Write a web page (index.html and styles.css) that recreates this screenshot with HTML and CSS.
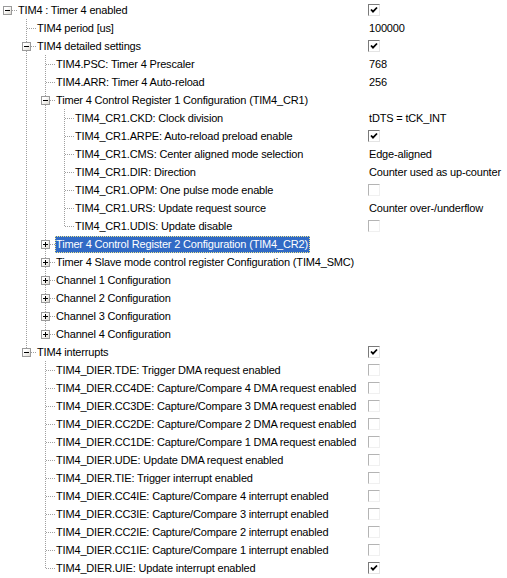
FILE: index.html
```html
<!DOCTYPE html>
<html>
<head>
<meta charset="utf-8">
<link rel="stylesheet" href="styles.css">
</head>
<body>
<div class="tree">
  <div class="row"><div class="tc"><span class="c"><i class="x minus"></i></span><span class="lbl">TIM4 : Timer 4 enabled</span></div><div class="val"><span class="cb on"><svg viewBox="0 0 10 10"><path d="M2 4.5 L4 6.7 L8 2.5"/></svg></span></div></div>
  <div class="row"><div class="tc"><span class="g"></span><span class="c t b"></span><span class="lbl">TIM4 period [us]</span></div><div class="val">100000</div></div>
  <div class="row"><div class="tc"><span class="g"></span><span class="c t b"><i class="x minus"></i></span><span class="lbl">TIM4 detailed settings</span></div><div class="val"><span class="cb on"><svg viewBox="0 0 10 10"><path d="M2 4.5 L4 6.7 L8 2.5"/></svg></span></div></div>
  <div class="row"><div class="tc"><span class="g"></span><span class="g v"></span><span class="c t b"></span><span class="lbl">TIM4.PSC: Timer 4 Prescaler</span></div><div class="val">768</div></div>
  <div class="row"><div class="tc"><span class="g"></span><span class="g v"></span><span class="c t b"></span><span class="lbl">TIM4.ARR: Timer 4 Auto-reload</span></div><div class="val">256</div></div>
  <div class="row"><div class="tc"><span class="g"></span><span class="g v"></span><span class="c t b"><i class="x minus"></i></span><span class="lbl">Timer 4 Control Register 1 Configuration (TIM4_CR1)</span></div><div class="val"></div></div>
  <div class="row"><div class="tc"><span class="g"></span><span class="g v"></span><span class="g v"></span><span class="c t b"></span><span class="lbl">TIM4_CR1.CKD: Clock division</span></div><div class="val">tDTS = tCK_INT</div></div>
  <div class="row"><div class="tc"><span class="g"></span><span class="g v"></span><span class="g v"></span><span class="c t b"></span><span class="lbl">TIM4_CR1.ARPE: Auto-reload preload enable</span></div><div class="val"><span class="cb on"><svg viewBox="0 0 10 10"><path d="M2 4.5 L4 6.7 L8 2.5"/></svg></span></div></div>
  <div class="row"><div class="tc"><span class="g"></span><span class="g v"></span><span class="g v"></span><span class="c t b"></span><span class="lbl">TIM4_CR1.CMS: Center aligned mode selection</span></div><div class="val">Edge-aligned</div></div>
  <div class="row"><div class="tc"><span class="g"></span><span class="g v"></span><span class="g v"></span><span class="c t b"></span><span class="lbl">TIM4_CR1.DIR: Direction</span></div><div class="val">Counter used as up-counter</div></div>
  <div class="row"><div class="tc"><span class="g"></span><span class="g v"></span><span class="g v"></span><span class="c t b"></span><span class="lbl">TIM4_CR1.OPM: One pulse mode enable</span></div><div class="val"><span class="cb"></span></div></div>
  <div class="row"><div class="tc"><span class="g"></span><span class="g v"></span><span class="g v"></span><span class="c t b"></span><span class="lbl">TIM4_CR1.URS: Update request source</span></div><div class="val">Counter over-/underflow</div></div>
  <div class="row"><div class="tc"><span class="g"></span><span class="g v"></span><span class="g v"></span><span class="c t"></span><span class="lbl">TIM4_CR1.UDIS: Update disable</span></div><div class="val"><span class="cb"></span></div></div>
  <div class="row"><div class="tc"><span class="g"></span><span class="g v"></span><span class="c t b"><i class="x plus"></i></span><span class="lbl sel">Timer 4 Control Register 2 Configuration (TIM4_CR2)</span></div><div class="val"></div></div>
  <div class="row"><div class="tc"><span class="g"></span><span class="g v"></span><span class="c t b"><i class="x plus"></i></span><span class="lbl">Timer 4 Slave mode control register Configuration (TIM4_SMC)</span></div><div class="val"></div></div>
  <div class="row"><div class="tc"><span class="g"></span><span class="g v"></span><span class="c t b"><i class="x plus"></i></span><span class="lbl">Channel 1 Configuration</span></div><div class="val"></div></div>
  <div class="row"><div class="tc"><span class="g"></span><span class="g v"></span><span class="c t b"><i class="x plus"></i></span><span class="lbl">Channel 2 Configuration</span></div><div class="val"></div></div>
  <div class="row"><div class="tc"><span class="g"></span><span class="g v"></span><span class="c t b"><i class="x plus"></i></span><span class="lbl">Channel 3 Configuration</span></div><div class="val"></div></div>
  <div class="row"><div class="tc"><span class="g"></span><span class="g v"></span><span class="c t"><i class="x plus"></i></span><span class="lbl">Channel 4 Configuration</span></div><div class="val"></div></div>
  <div class="row"><div class="tc"><span class="g"></span><span class="c t"><i class="x minus"></i></span><span class="lbl">TIM4 interrupts</span></div><div class="val"><span class="cb on"><svg viewBox="0 0 10 10"><path d="M2 4.5 L4 6.7 L8 2.5"/></svg></span></div></div>
  <div class="row"><div class="tc"><span class="g"></span><span class="g"></span><span class="c t b"></span><span class="lbl">TIM4_DIER.TDE: Trigger DMA request enabled</span></div><div class="val"><span class="cb"></span></div></div>
  <div class="row"><div class="tc"><span class="g"></span><span class="g"></span><span class="c t b"></span><span class="lbl">TIM4_DIER.CC4DE: Capture/Compare 4 DMA request enabled</span></div><div class="val"><span class="cb"></span></div></div>
  <div class="row"><div class="tc"><span class="g"></span><span class="g"></span><span class="c t b"></span><span class="lbl">TIM4_DIER.CC3DE: Capture/Compare 3 DMA request enabled</span></div><div class="val"><span class="cb"></span></div></div>
  <div class="row"><div class="tc"><span class="g"></span><span class="g"></span><span class="c t b"></span><span class="lbl">TIM4_DIER.CC2DE: Capture/Compare 2 DMA request enabled</span></div><div class="val"><span class="cb"></span></div></div>
  <div class="row"><div class="tc"><span class="g"></span><span class="g"></span><span class="c t b"></span><span class="lbl">TIM4_DIER.CC1DE: Capture/Compare 1 DMA request enabled</span></div><div class="val"><span class="cb"></span></div></div>
  <div class="row"><div class="tc"><span class="g"></span><span class="g"></span><span class="c t b"></span><span class="lbl">TIM4_DIER.UDE: Update DMA request enabled</span></div><div class="val"><span class="cb"></span></div></div>
  <div class="row"><div class="tc"><span class="g"></span><span class="g"></span><span class="c t b"></span><span class="lbl">TIM4_DIER.TIE: Trigger interrupt enabled</span></div><div class="val"><span class="cb"></span></div></div>
  <div class="row"><div class="tc"><span class="g"></span><span class="g"></span><span class="c t b"></span><span class="lbl">TIM4_DIER.CC4IE: Capture/Compare 4 interrupt enabled</span></div><div class="val"><span class="cb"></span></div></div>
  <div class="row"><div class="tc"><span class="g"></span><span class="g"></span><span class="c t b"></span><span class="lbl">TIM4_DIER.CC3IE: Capture/Compare 3 interrupt enabled</span></div><div class="val"><span class="cb"></span></div></div>
  <div class="row"><div class="tc"><span class="g"></span><span class="g"></span><span class="c t b"></span><span class="lbl">TIM4_DIER.CC2IE: Capture/Compare 2 interrupt enabled</span></div><div class="val"><span class="cb"></span></div></div>
  <div class="row"><div class="tc"><span class="g"></span><span class="g"></span><span class="c t b"></span><span class="lbl">TIM4_DIER.CC1IE: Capture/Compare 1 interrupt enabled</span></div><div class="val"><span class="cb"></span></div></div>
  <div class="row"><div class="tc"><span class="g"></span><span class="g"></span><span class="c t"></span><span class="lbl">TIM4_DIER.UIE: Update interrupt enabled</span></div><div class="val"><span class="cb on"><svg viewBox="0 0 10 10"><path d="M2 4.5 L4 6.7 L8 2.5"/></svg></span></div></div>
</div>
</body>
</html>
```

FILE: styles.css
```css
html, body {
  margin: 0;
  padding: 0;
  background: #fff;
}
body {
  font-family: "Liberation Sans", Arial, sans-serif;
  font-size: 11px;
  letter-spacing: -0.17px;
  color: #000;
  overflow: hidden;
}
.tree {
  padding-top: 1px;
  margin-left: -2px;
}
.row {
  display: grid;
  grid-template-columns: 370px 1fr;
  height: 18px;
  line-height: 18px;
}
.tc {
  display: flex;
  align-items: stretch;
  white-space: nowrap;
}
.g, .c {
  width: 19px;
  height: 18px;
  flex: none;
  position: relative;
}
.g.v {
  background: linear-gradient(to bottom, #a0a0a0 50%, transparent 50%) 9px 0 / 1px 2px repeat-y;
}
.c::after {
  content: "";
  position: absolute;
  left: 10px;
  top: 9px;
  width: 9px;
  height: 1px;
  background: linear-gradient(to right, #a0a0a0 50%, transparent 50%) 0 0 / 2px 1px repeat-x;
}
.c.t::before, .c.b::before {
  content: "";
  position: absolute;
  left: 9px;
  width: 1px;
  background: linear-gradient(to bottom, #a0a0a0 50%, transparent 50%) 0 0 / 1px 2px repeat-y;
}
.c.t::before { top: 0; height: 10px; }
.c.b::before { top: 9px; height: 9px; }
.c.t.b::before { top: 0; height: 18px; }
.x {
  position: absolute;
  left: 5px;
  top: 5px;
  width: 9px;
  height: 9px;
  box-sizing: border-box;
  border: 1px solid #9a9a9a;
  background: linear-gradient(135deg, #ffffff 30%, #dedbd4 100%);
  z-index: 1;
}
.x::before {
  content: "";
  position: absolute;
  left: 1px;
  top: 3px;
  width: 5px;
  height: 1px;
  background: #000;
}
.x.plus::after {
  content: "";
  position: absolute;
  left: 3px;
  top: 1px;
  width: 1px;
  height: 5px;
  background: #000;
}
.lbl {
  padding: 0 2px 0 1px;
  height: 18px;
}
.lbl.sel {
  background: #316ac5;
  color: #fff;
  height: 17px;
  line-height: 16px;
  margin-top: 1px;
  box-sizing: border-box;
  outline: 1px dotted #f0e68c;
  outline-offset: -1px;
}
.val {
  white-space: nowrap;
  padding-left: 1px;
}
.cb {
  display: inline-block;
  vertical-align: top;
  margin-top: 3px;
  margin-left: -1px;
  width: 12px;
  height: 12px;
  box-sizing: border-box;
  border-style: solid;
  border-width: 1px;
  border-color: #b4b4b4 #f0f0f0 #f0f0f0 #b4b4b4;
  background: #fff;
}
.cb.on {
  border-color: #7a7a7a #e4e4e4 #e4e4e4 #7a7a7a;
}
.cb svg {
  display: block;
  width: 10px;
  height: 10px;
}
.cb svg path {
  fill: none;
  stroke: #000;
  stroke-width: 1.8;
}
```
